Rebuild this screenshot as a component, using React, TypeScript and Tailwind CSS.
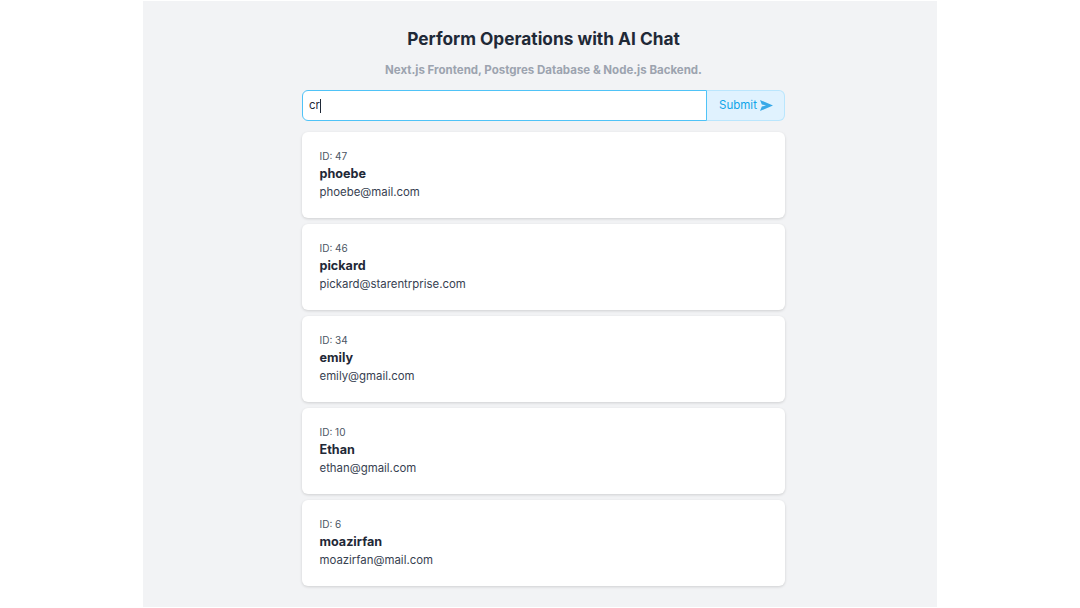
import React from 'react';

const USERS = [
  { id: 47, name: 'phoebe', email: 'phoebe@mail.com' },
  { id: 46, name: 'pickard', email: 'pickard@starentrprise.com' },
  { id: 34, name: 'emily', email: 'emily@gmail.com' },
  { id: 10, name: 'Ethan', email: 'ethan@gmail.com' },
  { id: 6, name: 'moazirfan', email: 'moazirfan@mail.com' },
];

const SendIcon = () => (
  <svg viewBox="0 0 13 11" className="w-[13px] h-[11px] ml-[3px] fill-[#38a9e8]">
    <path d="M0 0 13 5.5 0 11 1.8 6.6 6 5.5 1.8 4.4Z" />
  </svg>
);

const App: React.FC = () => {
  return (
    <div className="h-[608px] overflow-hidden bg-white py-px flex justify-center font-['Inter',sans-serif]">
      <div className="w-[794px] h-[606px] bg-[#f2f3f5] pl-[7px] flex flex-col items-center">
        <h1 className="mt-[26px] text-[17.3px] leading-[24px] font-bold text-[#1f2937]">
          Perform Operations with AI Chat
        </h1>
        <p className="mt-[11px] text-[11.5px] leading-[16px] font-bold text-[#9ca3af]">
          Next.js Frontend, Postgres Database &amp; Node.js Backend.
        </p>

        <div className="mt-[12px] w-[483px] h-[31px] flex text-[11.5px]">
          <div className="flex-1 flex items-center pl-[6px] bg-white border border-[#4fc3f7] rounded-l-[6px] text-[#1f2937]">
            cr<span className="w-px h-[14px] bg-[#1f2937]" />
          </div>
          <button className="w-[78px] pl-[1px] flex items-center justify-center bg-[#e0f2fe] border border-l-0 border-[#bae6fd] rounded-r-[6px] text-[#0ea5e9]">
            Submit
            <SendIcon />
          </button>
        </div>

        <div className="mt-[11px] w-[483px] flex flex-col gap-[6px]">
          {USERS.map((user) => (
            <div
              key={user.id}
              className="h-[86px] px-[17.5px] pt-[17px] bg-white rounded-[6px] shadow-[0_1px_3px_rgba(0,0,0,0.15)]"
            >
              <div className="text-[10px] leading-[14px] text-[#4b5563]">ID: {user.id}</div>
              <div className="mt-[2px] text-[12.6px] leading-[18px] font-bold text-[#1f2937]">{user.name}</div>
              <div className="text-[11.4px] leading-[18px] text-[#374151]">{user.email}</div>
            </div>
          ))}
        </div>
      </div>
    </div>
  );
};

export default App;
